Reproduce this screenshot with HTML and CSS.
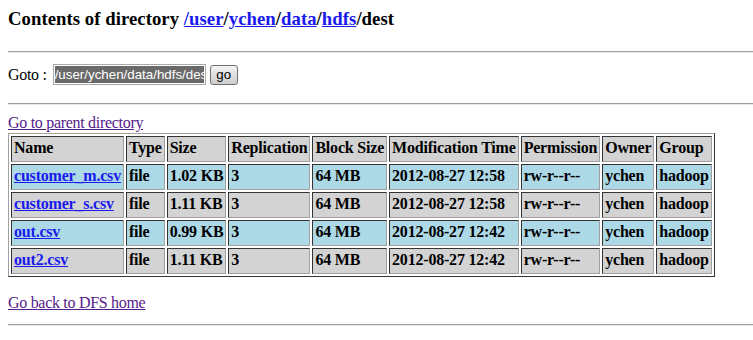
FILE: index.html
```html
<!DOCTYPE html>
<html>
<head>
<meta charset="utf-8">
<title>HDFS: /user/ychen/data/hdfs/dest</title>
<link rel="stylesheet" href="styles.css">
</head>
<body>
<h3 class="title">Contents of directory <a href="#">/user</a>/<a href="#">ychen</a>/<a href="#">data</a>/<a href="#">hdfs</a>/dest</h3>
<hr class="rule rule-top">
<form class="goto">
  <span class="goto-label">Goto :</span>
  <input class="goto-input" type="text" value="/user/ychen/data/hdfs/dest">
  <button class="goto-btn" type="button">go</button>
</form>
<hr class="rule rule-mid">
<a class="visited parent" href="#">Go to parent directory</a>
<table class="listing">
  <thead>
    <tr class="head"><th>Name</th><th>Type</th><th>Size</th><th>Replication</th><th>Block Size</th><th>Modification Time</th><th>Permission</th><th>Owner</th><th>Group</th></tr>
  </thead>
  <tbody>
    <tr class="blue"><td><a href="#">customer_m.csv</a></td><td>file</td><td>1.02 KB</td><td>3</td><td>64 MB</td><td>2012-08-27 12:58</td><td>rw-r--r--</td><td>ychen</td><td>hadoop</td></tr>
    <tr class="gray"><td><a href="#">customer_s.csv</a></td><td>file</td><td>1.11 KB</td><td>3</td><td>64 MB</td><td>2012-08-27 12:58</td><td>rw-r--r--</td><td>ychen</td><td>hadoop</td></tr>
    <tr class="blue"><td><a href="#">out.csv</a></td><td>file</td><td>0.99 KB</td><td>3</td><td>64 MB</td><td>2012-08-27 12:42</td><td>rw-r--r--</td><td>ychen</td><td>hadoop</td></tr>
    <tr class="gray"><td><a href="#">out2.csv</a></td><td>file</td><td>1.11 KB</td><td>3</td><td>64 MB</td><td>2012-08-27 12:42</td><td>rw-r--r--</td><td>ychen</td><td>hadoop</td></tr>
  </tbody>
</table>
<a class="visited home" href="#">Go back to DFS home</a>
<hr class="rule rule-bottom">
</body>
</html>
```

FILE: styles.css
```css
html, body {
  background: #ffffff;
}
body {
  margin: 8px 0 8px 8px;
  font-family: "Liberation Serif", "Times New Roman", serif;
  font-size: 16px;
  letter-spacing: -0.3px;
  color: #000;
}
a {
  color: #1a1aee;
}
a.visited {
  color: #551a8b;
}
.title {
  margin: 0;
  font-size: 18.72px;
  line-height: 22px;
  letter-spacing: 0.05px;
  font-weight: bold;
}
.rule {
  border: 0;
  height: 1px;
  background: #a0a0a0;
  border-bottom: 1px solid #e8e8e8;
  margin: 0;
}
.rule-top {
  margin-top: 21px;
}
.goto {
  display: flex;
  align-items: center;
  margin: 11px 0 0 0;
  height: 21px;
}
.goto-label {
  margin-right: 6px;
  line-height: 18px;
}
.goto-input {
  box-sizing: border-box;
  width: 153px;
  height: 21px;
  margin: 0;
  padding: 0 1px;
  border: 1px solid #a9a9a9;
  box-shadow: inset 0 0 0 1px #fff;
  background: #6a6a6a;
  color: #fff;
  font-family: "Liberation Sans", Arial, sans-serif;
  font-size: 13.33px;
  letter-spacing: 0;
  outline: none;
}
.goto-btn {
  box-sizing: border-box;
  margin-left: 4px;
  width: 28px;
  height: 20px;
  padding: 0;
  border: 1px solid #707070;
  border-radius: 3px;
  background: linear-gradient(#f4f4f4, #dedede 50%, #cfcfcf);
  font-family: "Liberation Sans", Arial, sans-serif;
  font-size: 13.33px;
  letter-spacing: 0;
  color: #000;
}
.rule-mid {
  margin-top: 18px;
}
.parent {
  display: block;
  width: max-content;
  margin-top: 9px;
  line-height: 18px;
}
.listing {
  margin-top: 1px;
  border-collapse: separate;
  border-spacing: 2px;
  border: 1px solid;
  border-color: #a0a0a0 #333 #333 #a0a0a0;
  letter-spacing: -0.2px;
}
.listing th,
.listing td {
  padding: 2px 2px 4px;
  line-height: 18px;
  text-align: left;
  font-weight: bold;
  white-space: nowrap;
  border: 1px solid;
  border-color: #333 #a0a0a0 #a0a0a0 #333;
}
.listing .head th,
.listing .gray td {
  background: #d3d3d3;
}
.listing .blue td {
  background: #add8e6;
}
.home {
  display: block;
  width: max-content;
  margin-top: 17px;
  line-height: 18px;
}
.rule-bottom {
  margin-top: 12px;
}
```
